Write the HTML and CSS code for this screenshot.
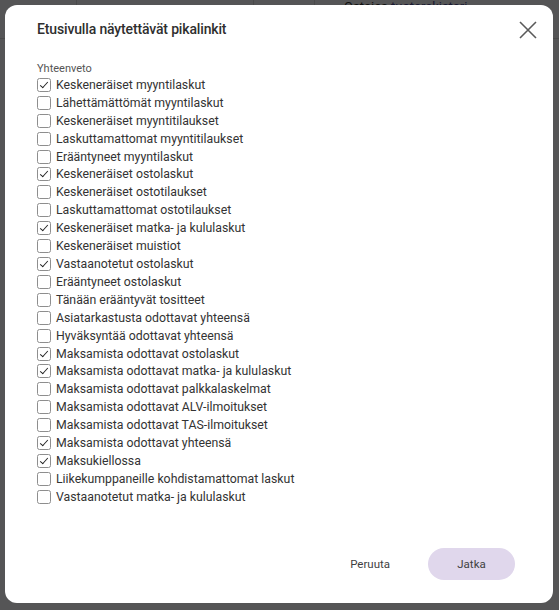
FILE: index.html
```html
<!DOCTYPE html>
<html lang="fi">
<head>
<meta charset="utf-8">
<title>Etusivulla näytettävät pikalinkit</title>
<link rel="stylesheet" href="styles.css">
</head>
<body>
<div class="page">
  <div class="page-top">
    <span class="cell c1"></span><span class="cell c2"></span><span class="cell c3"></span>
    <span class="page-link">Ostaies <span class="blue">tuoterekisteri</span></span>
  </div>
</div>
<div class="overlay"></div>
<div class="modal" role="dialog">
  <div class="modal-head">
    <h1 class="modal-title">Etusivulla näytettävät pikalinkit</h1>
    <button class="close" aria-label="Sulje">
      <svg width="20" height="20" viewBox="0 0 20 20"><path d="M2 2 L18 18 M18 2 L2 18" stroke="#5a5a5a" stroke-width="1.6" fill="none"/></svg>
    </button>
  </div>
  <div class="modal-body">
    <div class="group-label">Yhteenveto</div>
    <ul class="list">
      <li class="item on"><span class="box"></span>Keskeneräiset myyntilaskut</li>
      <li class="item"><span class="box"></span>Lähettämättömät myyntilaskut</li>
      <li class="item"><span class="box"></span>Keskeneräiset myyntitilaukset</li>
      <li class="item"><span class="box"></span>Laskuttamattomat myyntitilaukset</li>
      <li class="item"><span class="box"></span>Erääntyneet myyntilaskut</li>
      <li class="item on"><span class="box"></span>Keskeneräiset ostolaskut</li>
      <li class="item"><span class="box"></span>Keskeneräiset ostotilaukset</li>
      <li class="item"><span class="box"></span>Laskuttamattomat ostotilaukset</li>
      <li class="item on"><span class="box"></span>Keskeneräiset matka- ja kululaskut</li>
      <li class="item"><span class="box"></span>Keskeneräiset muistiot</li>
      <li class="item on"><span class="box"></span>Vastaanotetut ostolaskut</li>
      <li class="item"><span class="box"></span>Erääntyneet ostolaskut</li>
      <li class="item"><span class="box"></span>Tänään erääntyvät tositteet</li>
      <li class="item"><span class="box"></span>Asiatarkastusta odottavat yhteensä</li>
      <li class="item"><span class="box"></span>Hyväksyntää odottavat yhteensä</li>
      <li class="item on"><span class="box"></span>Maksamista odottavat ostolaskut</li>
      <li class="item on"><span class="box"></span>Maksamista odottavat matka- ja kululaskut</li>
      <li class="item"><span class="box"></span>Maksamista odottavat palkkalaskelmat</li>
      <li class="item"><span class="box"></span>Maksamista odottavat ALV-ilmoitukset</li>
      <li class="item"><span class="box"></span>Maksamista odottavat TAS-ilmoitukset</li>
      <li class="item on"><span class="box"></span>Maksamista odottavat yhteensä</li>
      <li class="item on"><span class="box"></span>Maksukiellossa</li>
      <li class="item"><span class="box"></span>Liikekumppaneille kohdistamattomat laskut</li>
      <li class="item"><span class="box"></span>Vastaanotetut matka- ja kululaskut</li>
    </ul>
  </div>
  <div class="modal-foot">
    <button class="btn btn-text">Peruuta</button>
    <button class="btn btn-primary">Jatka</button>
  </div>
</div>
</body>
</html>
```

FILE: styles.css
```css
html, body {
  margin: 0;
  padding: 0;
}
body {
  width: 559px;
  height: 610px;
  overflow: hidden;
  background: #f4f4f6;
  font-family: Roboto, "Noto Sans", sans-serif;
  position: relative;
}
.page {
  width: 559px;
  height: 610px;
}
.page-top {
  display: flex;
  height: 38px;
  border-bottom: 1px solid #d4d4d4;
  position: relative;
}
.cell {
  border-right: 1px solid #d4d4d4;
}
.c1 { width: 76px; }
.c2 { width: 176px; }
.c3 { width: 60px; }
.page-link {
  position: absolute;
  left: 344px;
  top: 0;
  font-size: 13px;
  line-height: 14px;
  color: #333;
}
.blue { color: #4b4a8c; }
.overlay {
  position: absolute;
  inset: 0;
  background: rgba(0, 0, 0, 0.65);
}
.modal {
  position: absolute;
  left: 5px;
  top: 5px;
  width: 548px;
  height: 598px;
  background: #fff;
  border-radius: 12px;
  display: flex;
  flex-direction: column;
  box-sizing: border-box;
  padding: 0 16px 0 32px;
}
.modal-head {
  display: flex;
  justify-content: space-between;
  align-items: center;
  height: 46px;
  padding-top: 1px;
}
.modal-title {
  margin: 0;
  font-size: 14px;
  font-weight: 500;
  color: #2f2f2f;
  letter-spacing: -0.15px;
}
.close {
  border: 0;
  background: none;
  padding: 0;
  width: 20px;
  height: 20px;
  margin-right: -1px;
  margin-top: 2px;
  cursor: pointer;
}
.close svg { display: block; }
.modal-body {
  flex: 1;
  padding-top: 10px;
}
.group-label {
  font-size: 11px;
  color: #555;
  line-height: 14px;
}
.list {
  list-style: none;
  margin: 0;
  padding: 0;
}
.item {
  display: flex;
  align-items: center;
  height: 17.92px;
  font-size: 12.3px;
  color: #333;
}
.box {
  width: 12px;
  height: 12px;
  border: 1px solid #8e8e8e;
  border-radius: 2.5px;
  margin-right: 5px;
  flex: none;
  position: relative;
  box-sizing: content-box;
}
.item.on .box::after {
  content: "";
  position: absolute;
  left: 3.5px;
  top: 1px;
  width: 3px;
  height: 7px;
  border-right: 1.6px solid #222;
  border-bottom: 1.6px solid #222;
  transform: rotate(42deg);
}
.modal-foot {
  display: flex;
  justify-content: flex-end;
  align-items: center;
  gap: 30px;
  padding: 0 22px 23px 0;
}
.btn {
  font-family: inherit;
  font-size: 11.5px;
  height: 32px;
  border: 0;
  border-radius: 16px;
  color: #3f3f3f;
  cursor: pointer;
}
.btn-text {
  background: none;
  padding: 0 8px;
}
.btn-primary {
  width: 87px;
  background: #e0d7ec;
}
```
